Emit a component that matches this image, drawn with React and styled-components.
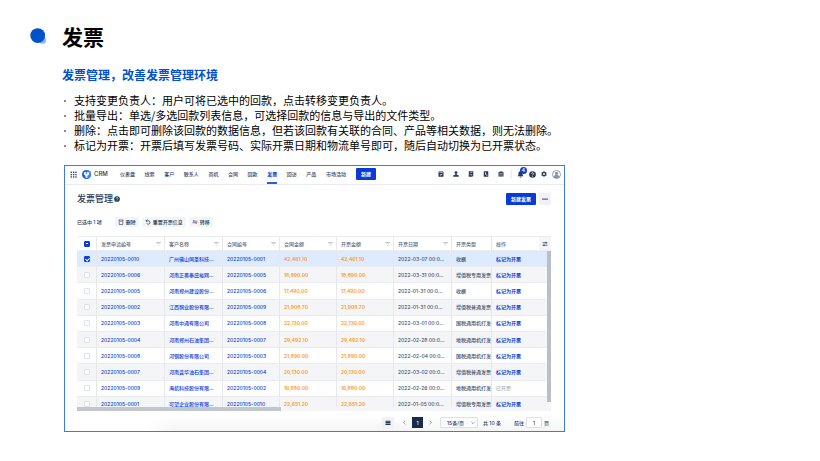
import React, { Component } from "react";
import styled, { createGlobalStyle } from "styled-components";

const GlobalStyle = createGlobalStyle`
  * {
    box-sizing: border-box;
  }

  body {
    margin: 0;
    background: #fff;
    color: #000;
    font-family: "Noto Sans CJK SC", sans-serif;
  }

  button, input, select {
    font: inherit;
    margin: 0;
  }

  svg {
    display: block;
    flex: none;
  }
`;

const Page = styled.main`
  padding: 21px 0 28px;
`;

const PageHeader = styled.header`
  display: flex;
  align-items: center;
  gap: 16px;
  padding-left: 30px;
`;

const Title = styled.h1`
  margin: 0;
  font-size: 21px;
  line-height: 30px;
`;

const Intro = styled.section`
  padding: 16px 0 0 62px;
`;

const Subtitle = styled.h2`
  margin: 0;
  color: #0052cc;
  font-size: 12px;
  line-height: 16px;
`;

const FeatureList = styled.ul`
  list-style: none;
  margin: 0;
  padding: 10px 0 0;
  font-size: 11px;
  line-height: 15px;
`;

const Feature = styled.li`
  display: flex;
  align-items: center;
  gap: 8px;

  &::before {
    content: "";
    width: 2px;
    height: 2px;
    margin-left: 2px;
    background: #8a8a8a;
  }
`;

const PanelWrap = styled.section`
  padding: 12px 255px 0 64px;
`;

const Panel = styled.div`
  border: 1px solid #3b7ddd;
  background: #fff;
  color: #344563;
  font-family: Inter, "Noto Sans CJK SC", sans-serif;
  font-size: 5px;
  font-weight: 500;
  line-height: 8px;
`;

const TopBar = styled.div`
  display: flex;
  align-items: center;
  height: 19px;
  padding: 0 3px 2px 5px;
  border-bottom: 1px solid #ebecf0;
`;

const Brand = styled.div`
  display: flex;
  align-items: center;
  gap: 3px;
  margin-left: 5px;
  flex: 0 0 38px;
  color: #253858;
  font-size: 6px;
`;

const Nav = styled.nav`
  display: flex;
  flex: 0 0 226px;
  justify-content: space-between;
  align-self: stretch;
`;

const NavLink = styled.a`
  position: relative;
  color: ${props => (props.$active ? "#0b3fd9" : "#344563")};
  font-weight: ${props => (props.$active ? 700 : 500)};
  line-height: 16px;
  text-decoration: none;

  &::after {
    content: "";
    display: ${props => (props.$active ? "block" : "none")};
    position: absolute;
    left: 0;
    right: 0;
    bottom: -2px;
    height: 2px;
    background: #2f5be0;
  }
`;

const PrimaryButton = styled.button`
  height: 12px;
  padding: 0 5px;
  border: none;
  border-radius: 1px;
  background: #0b3bd6;
  color: #fff;
  font-weight: 700;
`;

const CreateButton = styled(PrimaryButton)`
  margin-left: 10px;
`;

const Tools = styled.div`
  display: flex;
  align-items: center;
  gap: 7px;
  margin-left: auto;
  color: #253858;
`;

const IconButton = styled.button`
  position: relative;
  padding: 0;
  border: none;
  background: none;
  color: inherit;
`;

const ToolGroup = styled.div`
  display: flex;
  align-items: center;
  gap: ${props => props.$gap}px;
`;

const Divider = styled.span`
  width: 1px;
  height: 10px;
  background: #ebecf0;
`;

const Badge = styled.span`
  position: absolute;
  left: 3px;
  top: -4px;
  width: 7px;
  height: 7px;
  border-radius: 50%;
  background: #0b3fd9;
  color: #fff;
  font-size: 5px;
  line-height: 7px;
  text-align: center;
`;

const Body = styled.div`
  padding: 8px 13px 0 12px;
`;

const HeadingRow = styled.div`
  display: flex;
  align-items: center;
  gap: 3px;
  color: #253858;
`;

const Heading = styled.h3`
  display: flex;
  align-items: center;
  gap: 1px;
  margin: 0 auto 0 0;
  font-size: 9px;
  font-weight: 500;
  line-height: 12px;
`;

const SquareButton = styled.button`
  display: flex;
  align-items: center;
  justify-content: center;
  width: 12px;
  height: 12px;
  padding: 0;
  border: none;
  border-radius: 1px;
  background: #f1f2f5;
  color: #253858;
`;

const SelectionRow = styled.div`
  display: flex;
  align-items: center;
  gap: 3px;
  padding: 12px 0 9px;
  color: #253858;

  em {
    color: #0b3fd9;
    font-style: normal;
  }
`;

const SelectedCount = styled.span`
  margin-right: 10px;
`;

const TagButton = styled.button`
  display: flex;
  align-items: center;
  gap: 2px;
  height: 10px;
  padding: 0 3px;
  border: none;
  border-radius: 1px;
  background: #f4f5f7;
  color: #253858;
`;

const TableViewport = styled.div`
  position: relative;
  height: 175px;
  overflow: hidden;
`;

const Table = styled.table`
  width: 100%;
  height: 177px;
  table-layout: fixed;
  border-collapse: separate;
  border-spacing: 0;
  border-top: 1px solid #ebecf0;
`;

const Cell = styled.td`
  height: 16px;
  padding: 0 0 0 4px;
  overflow: hidden;
  border-right: 1px solid ${props => (props.$last ? "transparent" : "#e6e8ed")};
  border-bottom: 1px solid #ebecf0;
  color: ${props => props.$color || "#42526e"};
  text-align: left;
  white-space: nowrap;
`;

const HeadCell = styled(Cell)`
  height: 14px;
  color: #5e6c84;
  font-weight: 500;
`;

const HeadContent = styled.div`
  display: flex;
  align-items: center;
  justify-content: space-between;
  padding-right: 3px;
`;

const SettingsCell = styled(HeadCell)`
  padding: 0 3px;
  background: #f4f5f7;
  color: #253858;
`;

const AmountCell = styled(Cell)`
  color: #ff991f;
  font-weight: 600;
`;

const Row = styled.tr`
  background: ${props => (props.$selected ? "#deebff" : "#fff")};

  &:nth-child(even) {
    background: #f4f5f7;
  }
`;

const CellLink = styled.a`
  color: #0b3fd9;
  font-weight: ${props => (props.$strong ? 700 : 500)};
  text-decoration: none;
`;

const CheckCell = styled(Cell)`
  padding: 0 0 0 7px;
`;

const CheckHeadCell = styled(CheckCell)`
  height: 14px;
`;

const Checkbox = styled.input`
  appearance: none;
  display: block;
  position: relative;
  width: 6px;
  height: 6px;
  border: 1px solid #dfe1e6;
  border-radius: 1px;
  background: #fff;

  &:checked, &:indeterminate {
    border-color: #0b3fd9;
    background: #0b3fd9;
  }

  &:checked::after {
    content: "";
    position: absolute;
    left: 1px;
    top: 0;
    width: 2px;
    height: 3px;
    border: solid #fff;
    border-width: 0 1px 1px 0;
    transform: rotate(45deg);
  }

  &:indeterminate::after {
    content: "";
    position: absolute;
    left: 1px;
    top: 1px;
    width: 2px;
    height: 1px;
    background: #fff;
  }
`;

const VerticalThumb = styled.span`
  position: absolute;
  right: 0;
  top: 15px;
  width: 4px;
  height: 151px;
  background: #b8bfca;
`;

const HorizontalThumb = styled.span`
  position: absolute;
  left: 0;
  bottom: 0;
  width: 43%;
  height: 4px;
  background: #c1c7d0;
`;

const Track = styled.span`
  position: absolute;
  left: 0;
  right: 0;
  bottom: 0;
  height: 4px;
  background: #f4f5f7;
`;

const Footer = styled.footer`
  display: flex;
  align-items: center;
  justify-content: flex-end;
  height: 20px;
  padding: 3px 15px 0 0;
  background:
    linear-gradient(to right, #fff 16%, transparent 22%),
    linear-gradient(to bottom, #fff 25%, #f4f4f4);
`;

const PageButton = styled.button`
  display: flex;
  align-items: center;
  justify-content: center;
  width: ${props => (props.$current ? 11 : 7)}px;
  height: 11px;
  padding: 0;
  border: none;
  background: ${props => (props.$current ? "#172b4d" : "none")};
  color: ${props => (props.$current ? "#fff" : "#5e6c84")};
`;

const Pages = styled.div`
  display: flex;
  align-items: center;
  gap: 4px;
  margin: 0 6px 0 7px;
`;

const SizeField = styled.div`
  position: relative;

  svg {
    position: absolute;
    right: 3px;
    top: 4px;
    pointer-events: none;
  }
`;

const SizeSelect = styled.select`
  appearance: none;
  display: block;
  width: 38px;
  height: 11px;
  padding: 0 0 0 6px;
  border: 1px solid #dfe1e6;
  border-radius: 1px;
  background: #fafbfc;
  color: #344563;
`;

const Total = styled.span`
  margin: 0 13px 0 5px;
`;

const JumpLabel = styled.label`
  display: flex;
  align-items: center;
  gap: 2px;
`;

const JumpInput = styled.input`
  width: 16px;
  height: 11px;
  padding: 0;
  border: 1px solid #dfe1e6;
  border-radius: 1px;
  background: #fff;
  color: #344563;
  text-align: center;
`;

const Icon = ({ size = 6, children }) => (
  <svg width={size} height={size} viewBox="0 0 12 12" fill="currentColor" aria-hidden="true">
    {children}
  </svg>
);

const Stroke = ({ size = 6, d, width = 1.5 }) => (
  <Icon size={size}>
    <path d={d} fill="none" stroke="currentColor" strokeWidth={width} />
  </Icon>
);

const BulletMark = () => (
  <svg width="16" height="16" viewBox="0 0 16 16" aria-hidden="true">
    <circle cx="12.4" cy="12.2" r="3.6" fill="#8fb3f0" />
    <circle cx="7.7" cy="7.6" r="7.4" fill="#0052cc" />
  </svg>
);

const AppsIcon = () => (
  <Icon size={7}>
    {[1, 5, 9].map(y => [1, 5, 9].map(x => (
      <rect key={`${x}-${y}`} x={x} y={y} width="2.4" height="2.4" />
    )))}
  </Icon>
);

const Logo = () => (
  <svg width="9" height="9" viewBox="0 0 18 18" aria-hidden="true">
    <circle cx="9" cy="9" r="9" fill="#1c5be8" />
    <path d="M9 0a9 9 0 0 1 9 9 9 9 0 0 1-5 8z" fill="#3f86fa" />
    <path d="M3.500 5.500L6 4l3 1.500L12 4l2.500 1.500L14 9l-3 2.500v4H7v-4L4 9z" fill="#fff" />
    <path d="M7 7h4L9 9z" fill="#1c5be8" />
  </svg>
);

const tasks = (
  <Icon>
    <path fillRule="evenodd" d="M2 1h8a1 1 0 0 1 1 1v8.500a1 1 0 0 1-1 1H2a1 1 0 0 1-1-1V2a1 1 0 0 1 1-1zM2.500 3v1h7V3zM3.500 7l2 2.500L9 6 8 5.200 5.500 7.800 4.400 6.200z" />
  </Icon>
);

const person = (
  <Icon>
    <circle cx="6" cy="3.200" r="2.900" />
    <path d="M4.800 5h2.400v2.200L11.500 9v2.500H.5V9l4.300-1.800z" />
  </Icon>
);

const notes = (
  <Icon>
    <path fillRule="evenodd" d="M1.500.5h9v9l-2 2h-7zM3.500 3v1.200h5V3zM3.500 6v1.200h5V6zM7 8.500v1.500l1.800-1.500z" />
  </Icon>
);

const phone = (
  <Icon>
    <path fillRule="evenodd" d="M1.500.5h9v11h-9zM4 2.500c-1 3 1.500 6.500 4.500 7l.5-1.500-1.500-1-1 .6L5.200 5.500 6 4.700 5.300 2.500z" />
  </Icon>
);

const briefcase = (
  <Icon>
    <path fillRule="evenodd" d="M1 2.500h2V1h6v1.500h2V11H1zM3 4.500v1h6v-1zM3 7v2h2V7zM7 7v2h2V7z" />
  </Icon>
);

const bell = (
  <Icon size={7}>
    <path d="M6 .5c2.200 0 3.500 1.600 3.500 3.700V7L11 9H1l1.500-2V4.200C2.500 2.100 3.800.5 6 .5zM4.500 9.700h3a1.500 1.500 0 0 1-3 0z" />
  </Icon>
);

const HelpIcon = ({ size }) => (
  <Icon size={size}>
    <circle cx="6" cy="6" r="5.700" />
    <path d="M4.200 4.700c0-2.400 3.600-2.300 3.600-.1C7.800 6 6 5.900 6 7.400M6 8.400v1.300" fill="none" stroke="#fff" strokeWidth="1.300" />
  </Icon>
);

const gear = (
  <Icon>
    <path fillRule="evenodd" d="M4.900.5h2.200l.4 1.500 1.300.7 1.500-.4 1.100 1.900L10.300 5.300v1.400l1.100 1.100-1.100 1.900-1.500-.4-1.300.7-.4 1.500H4.900L4.500 10l-1.300-.7-1.500.4L.6 7.800l1.100-1.100V5.300L.6 4.200l1.100-1.900 1.500.4L4.500 2zM6 4a2 2 0 1 0 0 4 2 2 0 0 0 0-4z" />
  </Icon>
);

const Avatar = () => (
  <svg width="9" height="9" viewBox="0 0 18 18" fill="#8993a4" aria-hidden="true">
    <circle cx="9" cy="9" r="8" fill="#fff" stroke="#8993a4" strokeWidth="1.800" />
    <circle cx="9" cy="6.800" r="3.100" />
    <path d="M3 14c.5-3 3-3.800 6-3.800s5.500.8 6 3.800c-3 3.500-9 3.500-12 0z" />
  </svg>
);

const FilterIcon = () => (
  <svg width="5" height="5" viewBox="0 0 10 10" fill="#b3bac5" aria-hidden="true">
    <path d="M0 2h10v1.500H0zM2 4.800h6v1.400H2zM4 7.500h2V9H4z" />
  </svg>
);

const ListIcon = () => (
  <Icon>
    <path d="M1 1.500h10v2H1zM1 4.200h10v2H1zM1 6.900h10v3H1z" />
  </Icon>
);

const navItems = ["仪表盘", "线索", "客户", "联系人", "商机", "合同", "回款", "发票", "回访", "产品", "市场活动"];

const features = [
  "支持变更负责人：用户可将已选中的回款，点击转移变更负责人。",
  "批量导出：单选/多选回款列表信息，可选择回款的信息与导出的文件类型。",
  "删除：点击即可删除该回款的数据信息，但若该回款有关联的合同、产品等相关数据，则无法删除。",
  "标记为开票：开票后填写发票号码、实际开票日期和物流单号即可，随后自动切换为已开票状态。"
];

const columns = ["发票申请编号", "客户名称", "合同编号", "合同金额", "开票金额", "开票日期"];

const invoices = [
  ["20220105-0010", "广州佛山同圣科技...", "20220105-0001", "42,461.10", "2022-03-07 00:0...", "收据"],
  ["20220105-0006", "河南正奥泰盛裕网...", "20220105-0005", "18,890.00", "2022-03-31 00:0...", "增值税专用发票"],
  ["20220105-0005", "河南郑州建设股份...", "20220105-0006", "17,490.00", "2022-01-31 00:0...", "收据"],
  ["20220105-0002", "江西铜业股份有限...", "20220105-0009", "21,908.70", "2022-01-31 00:0...", "增值税普通发票"],
  ["20220105-0003", "河南中通有限公司", "20220105-0008", "22,130.00", "2022-03-01 00:0...", "国税通用机打发"],
  ["20220105-0004", "河南郑州石油集团...", "20220105-0007", "29,492.10", "2022-02-28 00:0...", "地税通用机打发"],
  ["20220105-0008", "河钢股份有限公司", "20220105-0003", "21,890.00", "2022-02-04 00:0...", "国税通用机打发"],
  ["20220105-0007", "河南龚华油石集团...", "20220105-0004", "20,130.00", "2022-03-02 00:0...", "增值税普通发票"],
  ["20220105-0009", "海航科技股份有限...", "20220105-0002", "16,880.00", "2022-02-26 00:0...", "地税通用机打发"],
  ["20220105-0001", "可望企业股份有限...", "20220105-0010", "22,651.20", "2022-01-05 00:0...", "增值税专用发票"]
];

class InvoiceTable extends Component {
  state = {
    selected: ["20220105-0010"]
  };

  toggle = id => {
    const { selected } = this.state;
    this.setState({
      selected: selected.includes(id) ? selected.filter(item => item !== id) : [...selected, id]
    });
  };

  toggleAll = () => {
    const { selected } = this.state;
    this.setState({
      selected: selected.length === invoices.length ? [] : invoices.map(row => row[0])
    });
  };

  render() {
    const { selected } = this.state;
    const all = selected.length === invoices.length;

    return (
      <>
        <SelectionRow>
          <SelectedCount>已选中 <em>{selected.length}</em> 项</SelectedCount>
          <TagButton>
            <Stroke d="M1 2h10M2.500 2v9h7V2M4.500 5h3" width={1.2} />
            删除
          </TagButton>
          <TagButton>
            <Stroke d="M4.500 1L2 3.500 4.500 6M2 3.500h4.500a3.500 3.500 0 1 1-3.300 5" />
            重置开票信息
          </TagButton>
          <TagButton>
            <Stroke d="M11 4.500H2L4.500 2M1 7.500h9L7.500 10" width={1.2} />
            转移
          </TagButton>
        </SelectionRow>
        <TableViewport>
          <Table>
            <colgroup>
              {[20, 68, 58, 57, 57, 57, 58].map((width, i) => <col key={i} width={width} />)}
              <col />
              <col width="47" />
              <col width="12" />
            </colgroup>
            <thead>
              <tr>
                <CheckHeadCell as="th">
                  <Checkbox
                    type="checkbox"
                    aria-label="全选"
                    checked={all}
                    ref={el => {
                      if (el) el.indeterminate = selected.length > 0 && !all;
                    }}
                    onChange={this.toggleAll}
                  />
                </CheckHeadCell>
                {columns.map(name => (
                  <HeadCell as="th" key={name}>
                    <HeadContent>{name}<FilterIcon /></HeadContent>
                  </HeadCell>
                ))}
                <HeadCell as="th">开票类型</HeadCell>
                <HeadCell as="th" $last>操作</HeadCell>
                <SettingsCell as="th" $last>
                  <Stroke d="M1 3.500h10M1 8.500h10M8 1.500v4M4 6.500v4" />
                </SettingsCell>
              </tr>
            </thead>
            <tbody>
              {invoices.map(([id, customer, contract, amount, date, type]) => (
                <Row key={id} $selected={selected.includes(id)}>
                  <CheckCell>
                    <Checkbox
                      type="checkbox"
                      aria-label={id}
                      checked={selected.includes(id)}
                      onChange={() => this.toggle(id)}
                    />
                  </CheckCell>
                  <Cell><CellLink href="#">{id}</CellLink></Cell>
                  <Cell><CellLink href="#">{customer}</CellLink></Cell>
                  <Cell><CellLink href="#">{contract}</CellLink></Cell>
                  <AmountCell>{amount}</AmountCell>
                  <AmountCell>{amount}</AmountCell>
                  <Cell>{date}</Cell>
                  <Cell>{type}</Cell>
                  <Cell colSpan="2" $last $color="#a5adba">
                    {id === "20220105-0009" ? "已开票" : <CellLink href="#" $strong>标记为开票</CellLink>}
                  </Cell>
                </Row>
              ))}
            </tbody>
          </Table>
          <Track />
          <HorizontalThumb />
          <VerticalThumb />
        </TableViewport>
      </>
    );
  }
}

class App extends Component {
  render() {
    return (
      <Page>
        <GlobalStyle />
        <PageHeader>
          <BulletMark />
          <Title>发票</Title>
        </PageHeader>
        <Intro>
          <Subtitle>发票管理，改善发票管理环境</Subtitle>
          <FeatureList>
            {features.map(text => <Feature key={text}>{text}</Feature>)}
          </FeatureList>
        </Intro>
        <PanelWrap>
          <Panel>
            <TopBar>
              <IconButton aria-label="应用"><AppsIcon /></IconButton>
              <Brand><Logo />CRM</Brand>
              <Nav>
                {navItems.map(item => (
                  <NavLink key={item} href="#" $active={item === "发票"}>{item}</NavLink>
                ))}
              </Nav>
              <CreateButton>新建</CreateButton>
              <Tools>
                <ToolGroup $gap={9}>
                  <IconButton aria-label="任务">{tasks}</IconButton>
                  <IconButton aria-label="客户">{person}</IconButton>
                  <IconButton aria-label="文档">{notes}</IconButton>
                  <IconButton aria-label="通话">{phone}</IconButton>
                  <IconButton aria-label="日程">{briefcase}</IconButton>
                </ToolGroup>
                <ToolGroup $gap={5}>
                  <Divider />
                  <IconButton aria-label="通知">{bell}<Badge>4</Badge></IconButton>
                  <IconButton aria-label="帮助"><HelpIcon size={7} /></IconButton>
                  <IconButton aria-label="设置">{gear}</IconButton>
                  <IconButton aria-label="账户"><Avatar /></IconButton>
                </ToolGroup>
              </Tools>
            </TopBar>
            <Body>
              <HeadingRow>
                <Heading>发票管理<HelpIcon size={6} /></Heading>
                <PrimaryButton>新建发票</PrimaryButton>
                <SquareButton aria-label="更多">
                  <Icon>
                    <path d="M.5 5h3v2.500h-3zM4.500 5h3v2.500h-3zM8.500 5h3v2.500h-3z" />
                  </Icon>
                </SquareButton>
              </HeadingRow>
              <InvoiceTable />
            </Body>
            <Footer>
              <SquareButton aria-label="列表"><ListIcon /></SquareButton>
              <Pages>
                <PageButton aria-label="上一页"><Stroke size={5} d="M8 2L4 6l4 4" /></PageButton>
                <PageButton $current>1</PageButton>
                <PageButton aria-label="下一页"><Stroke size={5} d="M4 2l4 4-4 4" /></PageButton>
              </Pages>
              <SizeField>
                <SizeSelect aria-label="每页条数">
                  <option>15条/页</option>
                </SizeSelect>
                <Stroke size={4} d="M2 4l4 4 4-4" />
              </SizeField>
              <Total>共 10 条</Total>
              <JumpLabel>
                前往
                <JumpInput defaultValue="1" />
                页
              </JumpLabel>
            </Footer>
          </Panel>
        </PanelWrap>
      </Page>
    );
  }
}

export default App;
